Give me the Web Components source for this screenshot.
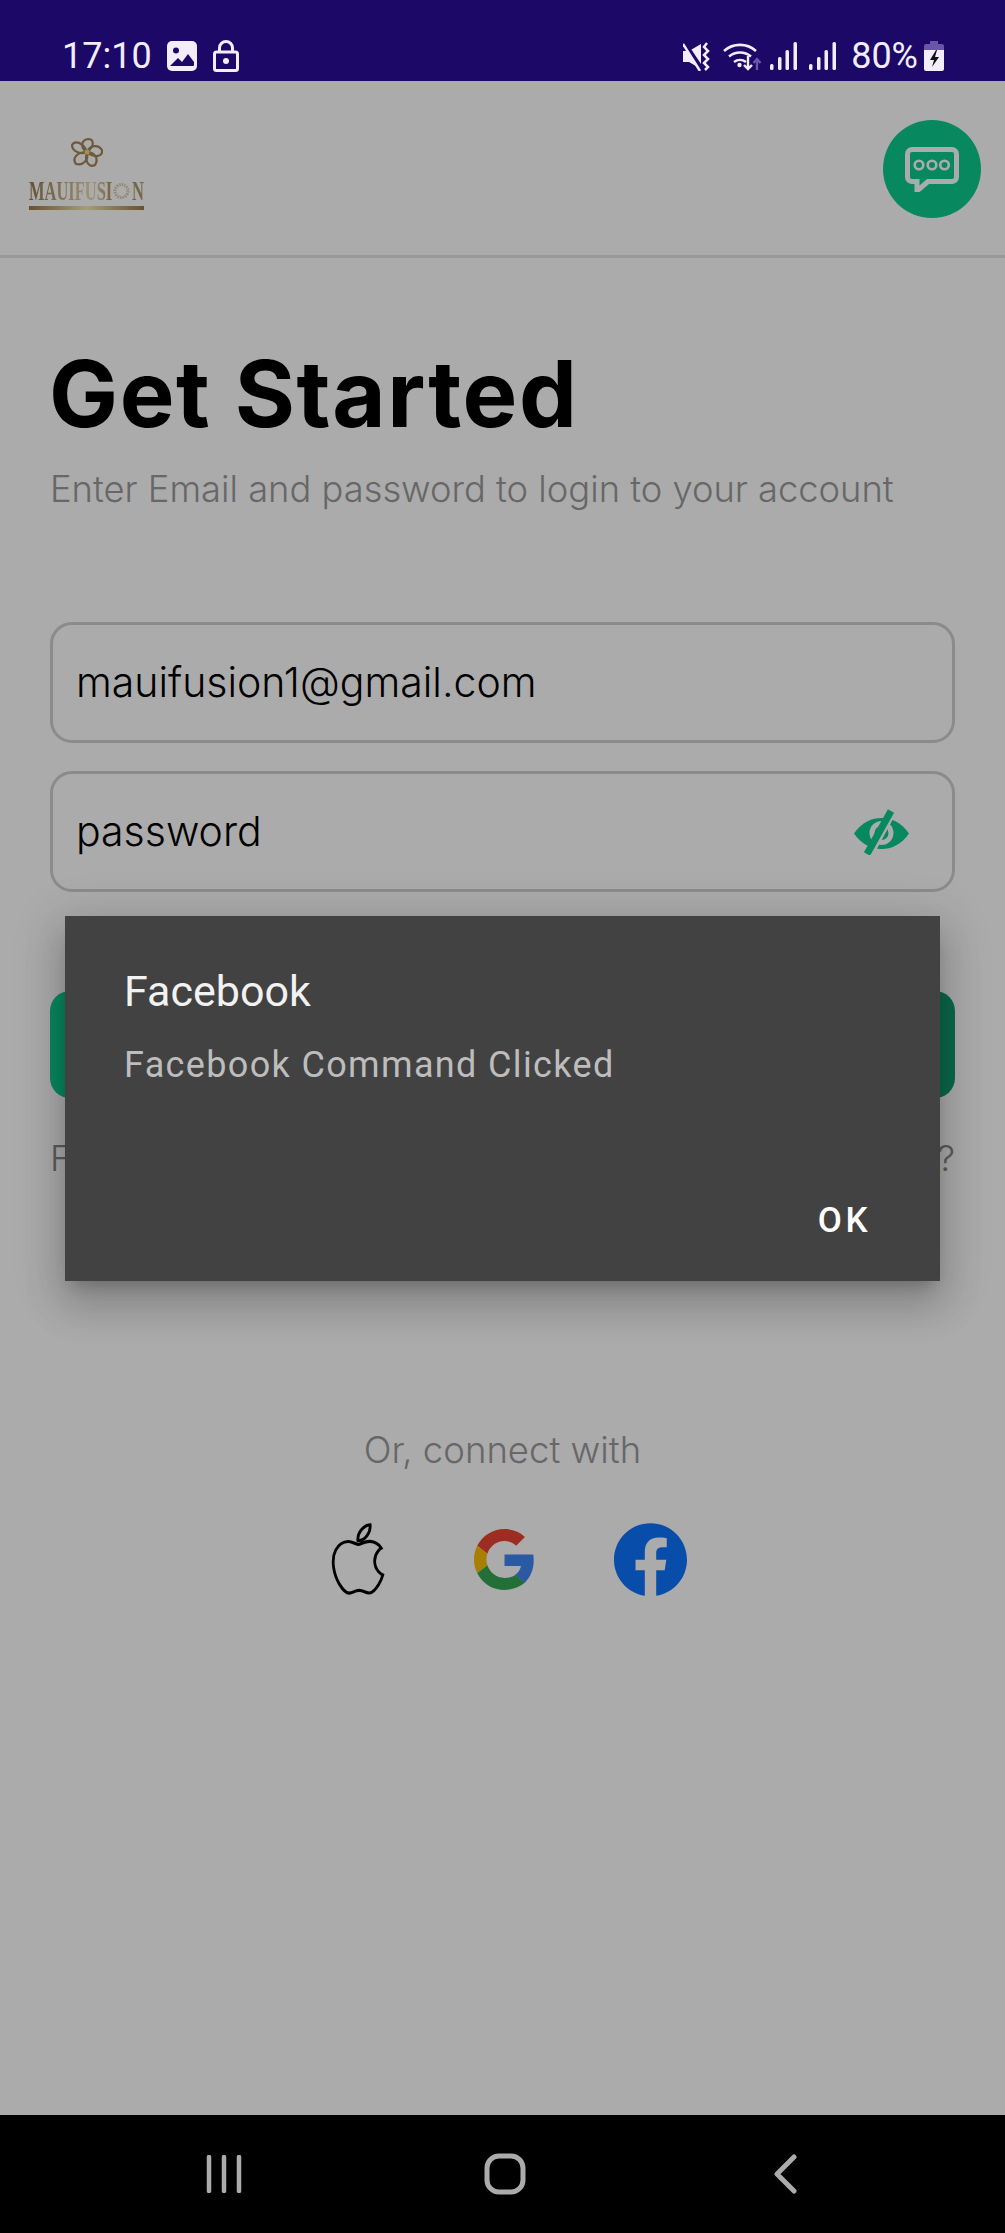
<!DOCTYPE html>
<html lang="en">
<head>
<meta charset="UTF-8">
<title>Get Started</title>
<style>
  html, body { margin: 0; padding: 0; background: #fff; }
</style>
</head>
<body>
<login-screen>
  <status-bar slot="status"></status-bar>
  <app-header slot="header"></app-header>
  <page-title slot="main" heading="Get Started" sub="Enter Email and password to login to your account"></page-title>
  <text-field slot="main" value="mauifusion1@gmail.com"></text-field>
  <text-field slot="main" value="password" eye></text-field>
  <green-button slot="main"></green-button>
  <link-row slot="main"></link-row>
  <social-row slot="main"></social-row>
  <nav-bar slot="nav"></nav-bar>
  <alert-dialog slot="overlay" heading="Facebook" message="Facebook Command Clicked" action="OK"></alert-dialog>
</login-screen>

<script>
  // small helper so each class only has to give its markup
  class Base extends HTMLElement {
    constructor() {
      super();
      this.attachShadow({ mode: 'open' }).innerHTML = this.markup();
    }
    markup() { return ''; }
  }

  const UI_FONT = 'Inter, "Noto Sans", sans-serif';
  const SIGNAL = '<rect x="0" y="22" width="3.500" height="6" rx="1.500"/><rect x="8" y="15" width="3.500" height="13" rx="1.500"/><rect x="15.500" y="8" width="3.500" height="20" rx="1.500"/><rect x="23.500" y="0" width="3.500" height="28" rx="1.500"/>';

  // Whole phone screen: status bar, content with scrim, nav bar
  customElements.define('login-screen', class extends Base {
    markup() { return `
      <style>
        :host { display: flex; flex-direction: column; width: 1005px; height: 2233px; overflow: hidden; }
        .body { position: relative; flex: 1; display: flex; flex-direction: column; min-height: 0; }
        main { flex: 1; display: flex; flex-direction: column; padding: 0 50px; }
        .scrim { position: absolute; inset: 0; background: rgba(0,0,0,.33); }
      </style>
      <slot name="status"></slot>
      <div class="body">
        <slot name="header"></slot>
        <main><slot name="main"></slot></main>
        <div class="scrim"></div>
        <slot name="overlay"></slot>
      </div>
      <slot name="nav"></slot>`; }
  });

  customElements.define('status-bar', class extends Base {
    markup() { return `
      <style>
        :host { display: flex; align-items: flex-end; height: 81px; flex: none; background: #1c0866; color: #f1edfb;
                font: 400 36px/1 Roboto, sans-serif; box-sizing: border-box; padding: 0 61px 7px 62px; }
        .left, .right { display: flex; align-items: center; }
        .right { margin-left: auto; }
        span { line-height: 36px; }
        svg { display: block; }
        .pct { margin: 0 6px 0 15px; }
      </style>
      <div class="left">
        <span>17:10</span>
        <svg style="margin-left:15px" width="30" height="30" viewBox="0 0 30 30"><rect width="30" height="30" rx="5" fill="#f1edfb"/><circle cx="9" cy="9.500" r="3" fill="#1c0866"/><path d="M3 25l8-8 4 4 6-8 6 8v3a1 1 0 0 1-1 1H4z" fill="#1c0866"/></svg>
        <svg style="margin-left:16px" width="26" height="32" viewBox="0 0 26 32" fill="none" stroke="#f1edfb" stroke-width="3"><rect x="1.500" y="12" width="23" height="18.500" rx="2"/><path d="M6.500 12V8a6.500 6.500 0 0 1 13 0v4"/><circle cx="13" cy="21" r="3" fill="#f1edfb" stroke="none"/></svg>
      </div>
      <div class="right">
        <svg width="27" height="29" viewBox="0 0 27 29"><path d="M0 9h6L18 2v25L6 20H0z" fill="#f1edfb"/><path d="M1 0l18 27" stroke="#1c0866" stroke-width="4"/><path d="M0 2l17 27" stroke="#f1edfb" stroke-width="2.500"/><path d="M24 1l-3 4 4 4-4 4 4 4-4 4 4 4-3 3" fill="none" stroke="#f1edfb" stroke-width="2.500"/></svg>
        <svg style="margin-left:13px" width="39" height="30" viewBox="0 0 39 30" fill="none"><path d="M1 10a24 24 0 0 1 32 0M6 15.500a17 17 0 0 1 22 0M11 21a10 10 0 0 1 12 0" stroke="#f1edfb" stroke-width="2.600"/><circle cx="16.500" cy="24" r="2.200" fill="#f1edfb"/><path d="M25 15v13M21 24l4 4 4-4" stroke="#f1edfb" stroke-width="2.400"/><path d="M34 29V19M30.500 22l3.500-4 3.500 4" stroke="#6a56a8" stroke-width="2.400"/></svg>
        <svg style="margin-left:8px" width="27" height="28" viewBox="0 0 27 28" fill="#f1edfb">${SIGNAL}</svg>
        <svg style="margin-left:12px" width="27" height="28" viewBox="0 0 27 28" fill="#f1edfb">${SIGNAL}</svg>
        <span class="pct">80%</span>
        <svg width="20" height="30" viewBox="0 0 20 30"><path d="M6 0h8v3h4a2 2 0 0 1 2 2v7H0V5a2 2 0 0 1 2-2h4z" fill="#6a56a8"/><path d="M0 9h20v19a2 2 0 0 1-2 2H2a2 2 0 0 1-2-2z" fill="#f1edfb"/><path d="M12 9l-6 10h4l-2 7 7-10h-4l2-7z" fill="#111"/></svg>
      </div>`; }
  });

  customElements.define('app-header', class extends Base {
    markup() { return `
      <style>
        :host { display: flex; justify-content: space-between; align-items: flex-start; height: 177px; flex: none; box-sizing: border-box;
                border-bottom: 3px solid #e4e4e4; padding: 39px 24px 0 29px; }
        .logo { display: flex; flex-direction: column; align-items: center; width: 115px; padding-top: 17px; }
        .word { display: flex; align-items: center; width: 115px; height: 22px; margin-top: 11px; font: 700 27px/22px "Liberation Serif", serif; white-space: nowrap; }
        .word svg { flex: none; }
        .word b, .word i { display: inline-block; font-weight: 700; font-style: normal; flex: none; transform: scaleX(.61); transform-origin: left;
                           -webkit-background-clip: text; background-clip: text; color: transparent; }
        .word b { width: 138px; margin-right: -54px; background-image: linear-gradient(90deg, #94784a, #c9b184 45%, #ecdcab 75%, #a88a5c); }
        .word i { width: 20px; margin-right: -8px; background-image: linear-gradient(#b09a6c, #b09a6c); }
        .ring { margin: 0 2px 0 0; }
        .bar { width: 115px; height: 3.500px; margin-top: 4px; background: linear-gradient(90deg, #9c7b45, #f4ebb4 50%, #9c7b45); }
        .chat { width: 98px; height: 98px; border-radius: 50%; background: #0ccb8e; display: flex; align-items: center; justify-content: center; }
      </style>
      <div class="logo">
        <svg width="32" height="32" viewBox="0 0 32 32" fill="none" stroke="#a3865a" stroke-width="2.200">
          <path d="M16 15C9 11 10 3 17 2c6 0 7 7 -1 13z"/><path d="M16 15c3-7 11-8 15-2 1 6-7 9-15 2z"/><path d="M16 15c8 0 12 7 8 13-6 3-11-4-8-13z"/><path d="M16 15c2 8-4 14-11 12-4-5 0-12 11-12z"/><path d="M16 15C9 18 1 14 1 8c3-5 11-3 15 7z"/>
          <circle cx="16" cy="15" r="2.500" fill="#f2d878" stroke="none"/>
        </svg>
        <div class="word"><b>MAUIFUSI</b><svg class="ring" width="17" height="18" viewBox="0 0 17 18" fill="none"><circle cx="8.500" cy="9" r="6.500" stroke="#d8cba8" stroke-width="3" stroke-dasharray="1.500 1"/></svg><i>N</i></div>
        <div class="bar"></div>
      </div>
      <div class="chat">
        <svg width="54" height="45" viewBox="0 0 54 45" fill="none"><path d="M7 2.500h40a4.500 4.500 0 0 1 4.500 4.500v23a4.500 4.500 0 0 1-4.500 4.500H23L12 44v-9.500H7A4.500 4.500 0 0 1 2.500 30V7A4.500 4.500 0 0 1 7 2.500z" fill="#0ccb8e" stroke="#fff" stroke-width="5"/><circle cx="14" cy="18" r="4.300" stroke="#fff" stroke-width="2.600"/><circle cx="27" cy="18" r="4.300" stroke="#fff" stroke-width="2.600"/><circle cx="39.500" cy="18" r="4.300" stroke="#fff" stroke-width="2.600"/></svg>
      </div>`; }
  });

  customElements.define('page-title', class extends Base {
    markup() { return `
      <style>
        :host { display: block; padding-top: 84px; }
        h1 { margin: 0 0 0 -1px; font: 700 92px/104px ${UI_FONT}; letter-spacing: 1.600px; color: #000; }
        p { margin: 19px 0 0; font: 300 36.300px/48px ${UI_FONT}; color: #9a9a9a; white-space: nowrap; }
      </style>
      <h1></h1><p></p>`; }
    connectedCallback() {
      this.shadowRoot.querySelector('h1').textContent = this.getAttribute('heading');
      this.shadowRoot.querySelector('p').textContent = this.getAttribute('sub');
    }
  });

  customElements.define('text-field', class extends Base {
    markup() { return `
      <style>
        :host { display: flex; align-items: center; justify-content: space-between; box-sizing: border-box; height: 121px; margin-top: 28px;
                border: 3px solid #d0d0d0; border-radius: 22px; padding: 0 42px 0 23px;
                font: 300 41px/1 ${UI_FONT}; color: #000; }
        :host(:first-of-type) { margin-top: 109px; }
        svg { display: none; }
        :host([eye]) svg { display: block; }
      </style>
      <span></span>
      <svg width="56" height="46" viewBox="0 0 56 46"><path d="M0 24.500C8 13 18 9 27.500 9S47 13 55 24.500C47 36 37 40 27.500 40S8 36 0 24.500z" fill="#0ccb8e"/><circle cx="27.500" cy="24" r="12" fill="#fff"/><circle cx="27.500" cy="24" r="7" fill="#0ccb8e"/><path d="M41 3L19 44" stroke="#fff" stroke-width="3"/><path d="M37 2L13 45" stroke="#0ccb8e" stroke-width="7"/></svg>`; }
    connectedCallback() {
      this.shadowRoot.querySelector('span').textContent = this.getAttribute('value');
    }
  });

  customElements.define('green-button', class extends Base {
    markup() { return `
      <style>
        :host { display: block; height: 107px; margin-top: 99px; border-radius: 20px; background: linear-gradient(90deg, #0ccb8e, #119c6f); }
      </style>`; }
  });

  customElements.define('link-row', class extends Base {
    markup() { return `
      <style>
        :host { display: flex; justify-content: space-between; margin-top: 38px; font: 300 36px/44px ${UI_FONT}; color: #8a8a8a; }
      </style>
      <span>F</span><span>?</span>`; }
  });

  customElements.define('social-row', class extends Base {
    markup() { return `
      <style>
        :host { display: flex; flex-direction: column; align-items: center; padding-top: 246px; }
        p { margin: 0; font: 300 36.500px/48px ${UI_FONT}; color: #9a9a9a; }
        .icons { display: flex; align-items: center; margin-top: 48px; width: 360px; box-sizing: border-box; padding-left: 2px; }
        svg { display: block; flex: none; }
      </style>
      <p>Or, connect with</p>
      <div class="icons">
        <svg width="66" height="74" viewBox="-1 -1 26 26" preserveAspectRatio="none" fill="none" stroke="#000" stroke-width="1.100"><path d="M12.152 6.896c-.948 0-2.415-1.078-3.960-1.040-2.040.027-3.910 1.183-4.961 3.014-2.117 3.675-.546 9.103 1.519 12.090 1.013 1.454 2.208 3.090 3.792 3.039 1.520-.065 2.090-.987 3.935-.987 1.831 0 2.350.987 3.960.948 1.637-.026 2.676-1.480 3.676-2.948 1.156-1.688 1.636-3.325 1.662-3.415-.039-.013-3.182-1.221-3.220-4.857-.026-3.040 2.480-4.494 2.597-4.559-1.429-2.090-3.623-2.324-4.390-2.376-2-.156-3.675 1.090-4.610 1.090zM15.530 3.830c.843-1.012 1.400-2.427 1.245-3.830-1.207.052-2.662.805-3.532 1.818-.78.896-1.454 2.338-1.273 3.714 1.338.104 2.715-.688 3.559-1.701"/></svg>
        <svg style="margin-left:83px" width="61" height="61" viewBox="0 0 48 48"><path fill="#EA4335" d="M24 9.500c3.540 0 6.710 1.220 9.210 3.600l6.850-6.850C35.900 2.380 30.470 0 24 0 14.620 0 6.510 5.380 2.560 13.220l7.980 6.190C12.430 13.720 17.740 9.500 24 9.500z"/><path fill="#4285F4" d="M46.980 24.550c0-1.570-.15-3.090-.38-4.550H24v9.020h12.940c-.58 2.960-2.260 5.480-4.780 7.180l7.730 6c4.510-4.180 7.090-10.360 7.090-17.650z"/><path fill="#FBBC05" d="M10.530 28.590c-.48-1.450-.76-2.990-.76-4.590s.27-3.140.76-4.590l-7.980-6.190C.92 16.460 0 20.120 0 24c0 3.880.92 7.540 2.560 10.780l7.970-6.190z"/><path fill="#34A853" d="M24 48c6.480 0 11.930-2.130 16.060-5.810l-7.730-6c-2.150 1.450-4.920 2.300-8.330 2.300-6.260 0-11.570-4.220-13.470-9.910l-7.980 6.190C6.510 42.620 14.620 48 24 48z"/></svg>
        <svg style="margin-left:79px" width="73" height="73" viewBox="0 0 24 24"><path fill="#0e74ff" d="M24 12.073c0-6.627-5.373-12-12-12s-12 5.373-12 12c0 5.990 4.388 10.954 10.125 11.854v-8.385H7.078v-3.470h3.047V9.430c0-3.007 1.792-4.669 4.533-4.669 1.312 0 2.686.235 2.686.235v2.953H15.830c-1.491 0-1.956.925-1.956 1.874v2.250h3.328l-.532 3.470h-2.796v8.385C19.612 23.027 24 18.062 24 12.073z"/></svg>
      </div>`; }
  });

  // Modal sits over the scrim
  customElements.define('alert-dialog', class extends Base {
    markup() { return `
      <style>
        :host { position: absolute; left: 65px; top: 835px; width: 875px; height: 365px; box-sizing: border-box; background: #424242; color: #fff;
                display: flex; flex-direction: column; padding: 47px 59px 0; font-family: Roboto, sans-serif;
                box-shadow: 0 24px 38px 3px rgba(0,0,0,.14), 0 9px 46px 8px rgba(0,0,0,.12), 0 11px 15px -7px rgba(0,0,0,.2); }
        h2 { margin: 0; font: 400 43px/56px Roboto, sans-serif; color: #f2f2f2; }
        p { margin: 23px 0 0; font: 400 36px/46px Roboto, sans-serif; letter-spacing: 1.350px; color: #bdbdbd; }
        button { all: unset; margin-top: auto; margin-bottom: 38px; align-self: flex-end; margin-right: 10px; font: 500 35px/44px Roboto, sans-serif; letter-spacing: 3.500px; color: #fff; }
      </style>
      <h2></h2><p></p><button></button>`; }
    connectedCallback() {
      const r = this.shadowRoot;
      r.querySelector('h2').textContent = this.getAttribute('heading');
      r.querySelector('p').textContent = this.getAttribute('message');
      r.querySelector('button').textContent = this.getAttribute('action');
    }
  });

  customElements.define('nav-bar', class extends Base {
    markup() { return `
      <style>
        :host { display: flex; flex: none; height: 118px; background: #000; align-items: center; box-sizing: border-box; padding: 0 208px 0 205px; justify-content: space-between; }
        svg { display: block; }
        .home { margin-right: 6px; }
      </style>
      <svg width="38" height="38" viewBox="0 0 38 38" stroke="#ababab" stroke-width="4.500" stroke-linecap="round"><path d="M4 2v34M19 2v34M34 2v34"/></svg>
      <svg class="home" width="42" height="42" viewBox="0 0 42 42" fill="none" stroke="#ababab" stroke-width="5"><rect x="3" y="3" width="36" height="36" rx="12"/></svg>
      <svg width="24" height="40" viewBox="0 0 24 40" fill="none" stroke="#ababab" stroke-width="5" stroke-linecap="round" stroke-linejoin="round"><path d="M21 3L4 20l17 17"/></svg>`; }
  });
</script>
</body>
</html>
